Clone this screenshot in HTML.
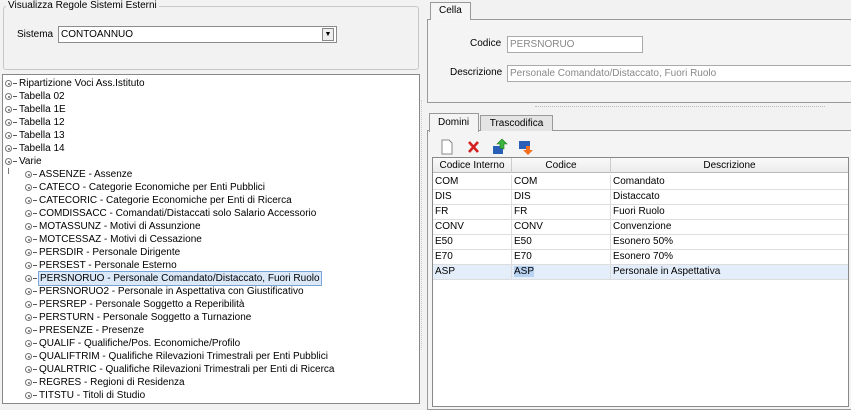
<!DOCTYPE html>
<html><head><meta charset="utf-8"><style>
*{margin:0;padding:0;box-sizing:border-box}
body{width:851px;height:400px;overflow:hidden;background:#f2f2f2;font-family:"Liberation Sans",sans-serif;font-size:10px;color:#000;position:relative}
.a{position:absolute}
.row{position:absolute;height:13px;line-height:13px;white-space:nowrap}
.ic{position:absolute;width:7px;height:7px;border:1px solid #777;border-radius:50%;background:#fff;top:3px}
.ic:after{content:"";position:absolute;left:1.5px;top:1.5px;width:2px;height:2px;background:#666;border-radius:50%}
.ds{position:absolute;width:4px;height:1px;background:#555;top:6px}
.tr{position:absolute;left:432px;width:416px;height:15px;border-bottom:1px solid #ddd;background:#fff;line-height:14px}
.tr span{position:absolute;top:0;height:14px;padding-left:2px}
.c1{left:0;width:79px;border-right:1px solid #ddd}
.c2{left:79px;width:99px;border-right:1px solid #ddd}
.c3{left:178px}
</style></head><body>
<div class="a" style="left:3px;top:6px;width:416px;height:64px;border:1px solid #c8c8c8;border-radius:3px"></div>
<div class="a" style="left:6px;top:-1px;background:#f2f2f2;padding:0 2px;line-height:14px">Visualizza Regole Sistemi Esterni</div>
<div class="a" style="left:17px;top:28px;line-height:14px">Sistema</div>
<div class="a" style="left:58px;top:26px;width:279px;height:17px;border:1px solid #8c8c8c;background:#fff;line-height:15px;padding-left:2px">CONTOANNUO</div>
<div class="a" style="left:322px;top:28px;width:12px;height:13px;border:1px solid #888;background:#eee;font-size:7px;text-align:center;line-height:12px">▼</div>
<div class="a" style="left:2px;top:74px;width:418px;height:330px;border:1px solid #888;background:#fff"></div>
<div id="tree"></div>
<div class="a" style="left:421px;top:100px;width:5px;height:250px;border-left:1px dotted #ccc"></div>
<div class="a" style="left:427px;top:19px;width:430px;height:84px;border:1px solid #999;background:#f4f4f4"></div>
<div class="a" style="left:430px;top:2px;width:41px;height:18px;border:1px solid #999;border-bottom:none;background:#f6f6f6;line-height:16px;padding-left:8px">Cella</div>
<div class="a" style="left:470px;top:37px;line-height:14px">Codice</div>
<div class="a" style="left:507px;top:36px;width:136px;height:17px;border:1px solid #aaa;background:#fff;color:#888;line-height:15px;padding-left:2px">PERSNORUO</div>
<div class="a" style="left:450px;top:66px;line-height:14px">Descrizione</div>
<div class="a" style="left:507px;top:65px;width:350px;height:17px;border:1px solid #aaa;background:#fff;color:#888;line-height:15px;padding-left:2px">Personale Comandato/Distaccato, Fuori Ruolo</div>
<div class="a" style="left:535px;top:106px;width:290px;border-top:1px dotted #bbb"></div>
<div class="a" style="left:427px;top:130px;width:430px;height:280px;border:1px solid #999;background:#f4f4f4"></div>
<div class="a" style="left:480px;top:115px;width:73px;height:16px;border:1px solid #999;border-bottom:none;background:#e4e4e4;line-height:15px;text-align:center">Trascodifica</div>
<div class="a" style="left:429px;top:113px;width:50px;height:19px;border:1px solid #999;border-bottom:none;background:#f4f4f4;line-height:17px;padding-left:8px">Domini</div>
<svg class="a" style="left:438px;top:138px" width="110" height="18">
<path d="M4 2h7l3 3v11H4z" fill="#fff" stroke="#888"/>
<path d="M31 4l9 10M40 4l-9 10" stroke="#d42020" stroke-width="2.6"/>
<rect x="55" y="8" width="10" height="8" fill="#2a5fb8"/><path d="M62 10v-4h-3l5-5 5 5h-3v5z" fill="#3cb33c" stroke="#1e7a1e" stroke-width=".6"/>
<rect x="81" y="3" width="11" height="8" fill="#2a5fb8"/><path d="M88 8v4h-3l5 5 5-5h-3v-4z" fill="#f07020"/>
</svg>
<div class="a" style="left:432px;top:157px;width:417px;height:250px;border:1px solid #888;background:#fff"></div>
<div class="a" style="left:433px;top:158px;width:415px;height:15px;background:linear-gradient(#fafafa,#ececec);border-bottom:1px solid #bbb;line-height:15px">
<span class="a" style="left:0;width:79px;text-align:center;border-right:1px solid #ccc">Codice Interno</span>
<span class="a" style="left:79px;width:99px;text-align:center;border-right:1px solid #ccc">Codice</span>
<span class="a" style="left:178px;width:237px;text-align:center">Descrizione</span></div>
<div id="tb"></div>
<script>
var t=document.getElementById('tree'),h='';
var tops=["Ripartizione Voci Ass.Istituto","Tabella 02","Tabella 1E","Tabella 12","Tabella 13","Tabella 14","Varie"];
var ch=["ASSENZE - Assenze","CATECO - Categorie Economiche per Enti Pubblici","CATECORIC - Categorie Economiche per Enti di Ricerca","COMDISSACC - Comandati/Distaccati solo Salario Accessorio","MOTASSUNZ - Motivi di Assunzione","MOTCESSAZ - Motivi di Cessazione","PERSDIR - Personale Dirigente","PERSEST - Personale Esterno","PERSNORUO - Personale Comandato/Distaccato, Fuori Ruolo","PERSNORUO2 - Personale in Aspettativa con Giustificativo","PERSREP - Personale Soggetto a Reperibilità","PERSTURN - Personale Soggetto a Turnazione","PRESENZE - Presenze","QUALIF - Qualifiche/Pos. Economiche/Profilo","QUALIFTRIM - Qualifiche Rilevazioni Trimestrali per Enti Pubblici","QUALRTRIC - Qualifiche Rilevazioni Trimestrali per Enti di Ricerca","REGRES - Regioni di Residenza","TITSTU - Titoli di Studio"];
var yy=77;
tops.forEach(function(s){h+='<div class="row" style="left:0;top:'+yy+'px;width:300px"><div class="ic" style="left:5px"></div><div class="ds" style="left:13px"></div><span style="position:absolute;left:19px">'+s+'</span></div>';yy+=13;});
h+='<div class="a" style="left:8px;top:168px;width:1px;height:6px;background:#777"></div>';
ch.forEach(function(s,i){var sel=i==8?'background:#dbe8f8;border:1px solid #7aa3d8;padding:0 1px;left:38px;top:-1px;':'left:39px;';h+='<div class="row" style="left:0;top:'+yy+'px;width:400px"><div class="ic" style="left:25px"></div><div class="ds" style="left:33px"></div><span style="position:absolute;'+sel+'">'+s+'</span></div>';yy+=13;});
t.innerHTML=h;
var d=[["COM","COM","Comandato"],["DIS","DIS","Distaccato"],["FR","FR","Fuori Ruolo"],["CONV","CONV","Convenzione"],["E50","E50","Esonero 50%"],["E70","E70","Esonero 70%"],["ASP","ASP","Personale in Aspettativa"]];
h='';yy=175;
d.forEach(function(r,i){var bg=i==6?'background:#e4eefa;':'';var hl=i==6?'<b style="font-weight:normal;background:#b8d2f0">ASP</b>':r[1];
h+='<div class="tr" style="top:'+yy+'px;left:433px;width:415px;'+bg+'"><span class="c1">'+r[0]+'</span><span class="c2">'+hl+'</span><span class="c3">'+r[2]+'</span></div>';yy+=15;});
document.getElementById('tb').innerHTML=h;
</script>
</body></html>
